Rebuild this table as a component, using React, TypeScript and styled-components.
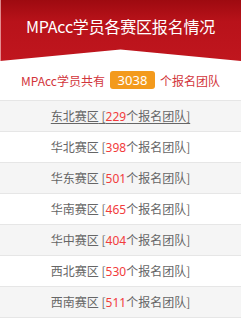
import React from "react";
import styled, { createGlobalStyle } from "styled-components";

const Global = createGlobalStyle`
  html, body { margin: 0; padding: 0; background: #fff; }
  body { font-family: "Microsoft YaHei", "Noto Sans CJK SC", "Noto Sans", sans-serif; }
`;

const Page = styled.div`
  width: 241px;
  height: 322px;
  overflow: hidden;
  background: #fff;
`;

const Header = styled.div`
  height: 61px;
  background: linear-gradient(180deg, #9e0a10 0%, #b8121a 35%, #c0161e 100%);
  clip-path: polygon(0 0, 100% 0, 100% 100%, 50% 81%, 0 100%);
  box-shadow: inset 1px 0 0 rgba(255, 220, 220, 0.6);
  display: flex;
  justify-content: center;
  padding-top: 14px;
  box-sizing: border-box;
`;

const Title = styled.h1`
  margin: 0;
  font-size: 16px;
  font-weight: 400;
  color: #fff;
  line-height: 24px;
  letter-spacing: -0.2px;
`;

const CountLine = styled.div`
  height: 39px;
  display: flex;
  align-items: center;
  justify-content: center;
  gap: 5px;
  font-size: 12px;
  color: #d2353b;
  padding-bottom: 1px;
  box-sizing: border-box;
`;

const Badge = styled.span`
  display: inline-flex;
  align-items: center;
  justify-content: center;
  width: 45px;
  height: 18px;
  border-radius: 3px;
  background: #f39a1c;
  color: #fff;
  font-size: 13px;
  font-family: "Noto Sans", sans-serif;
`;

const List = styled.ul`
  list-style: none;
  margin: 0;
  padding: 0;
  border-top: 1px solid #e6e6e6;
`;

const Row = styled.li<{ $alt: boolean }>`
  height: 30px;
  border-bottom: 1px solid #e6e6e6;
  background: ${(p) => (p.$alt ? "#f5f5f5" : "#fff")};
  display: flex;
  align-items: center;
  justify-content: center;
  font-size: 12px;
  color: #666;
`;

const Link = styled.a<{ $under: boolean }>`
  color: inherit;
  text-decoration: ${(p) => (p.$under ? "underline" : "none")};
  text-underline-offset: 2px;
`;

const Num = styled.span`
  color: #f23c3c;
  font-family: "Noto Sans", sans-serif;
`;

const regions = [
  ["东北赛区", "229"],
  ["华北赛区", "398"],
  ["华东赛区", "501"],
  ["华南赛区", "465"],
  ["华中赛区", "404"],
  ["西北赛区", "530"],
  ["西南赛区", "511"],
];

export default function App() {
  return (
    <Page>
      <Global />
      <Header>
        <Title>MPAcc学员各赛区报名情况</Title>
      </Header>
      <CountLine>
        <span>MPAcc学员共有</span>
        <Badge>3038</Badge>
        <span>个报名团队</span>
      </CountLine>
      <List>
        {regions.map(([name, n], i) => (
          <Row key={name} $alt={i % 2 === 0}>
            <Link $under={i === 0}>
              {name} [<Num>{n}</Num>个报名团队]
            </Link>
          </Row>
        ))}
      </List>
    </Page>
  );
}
